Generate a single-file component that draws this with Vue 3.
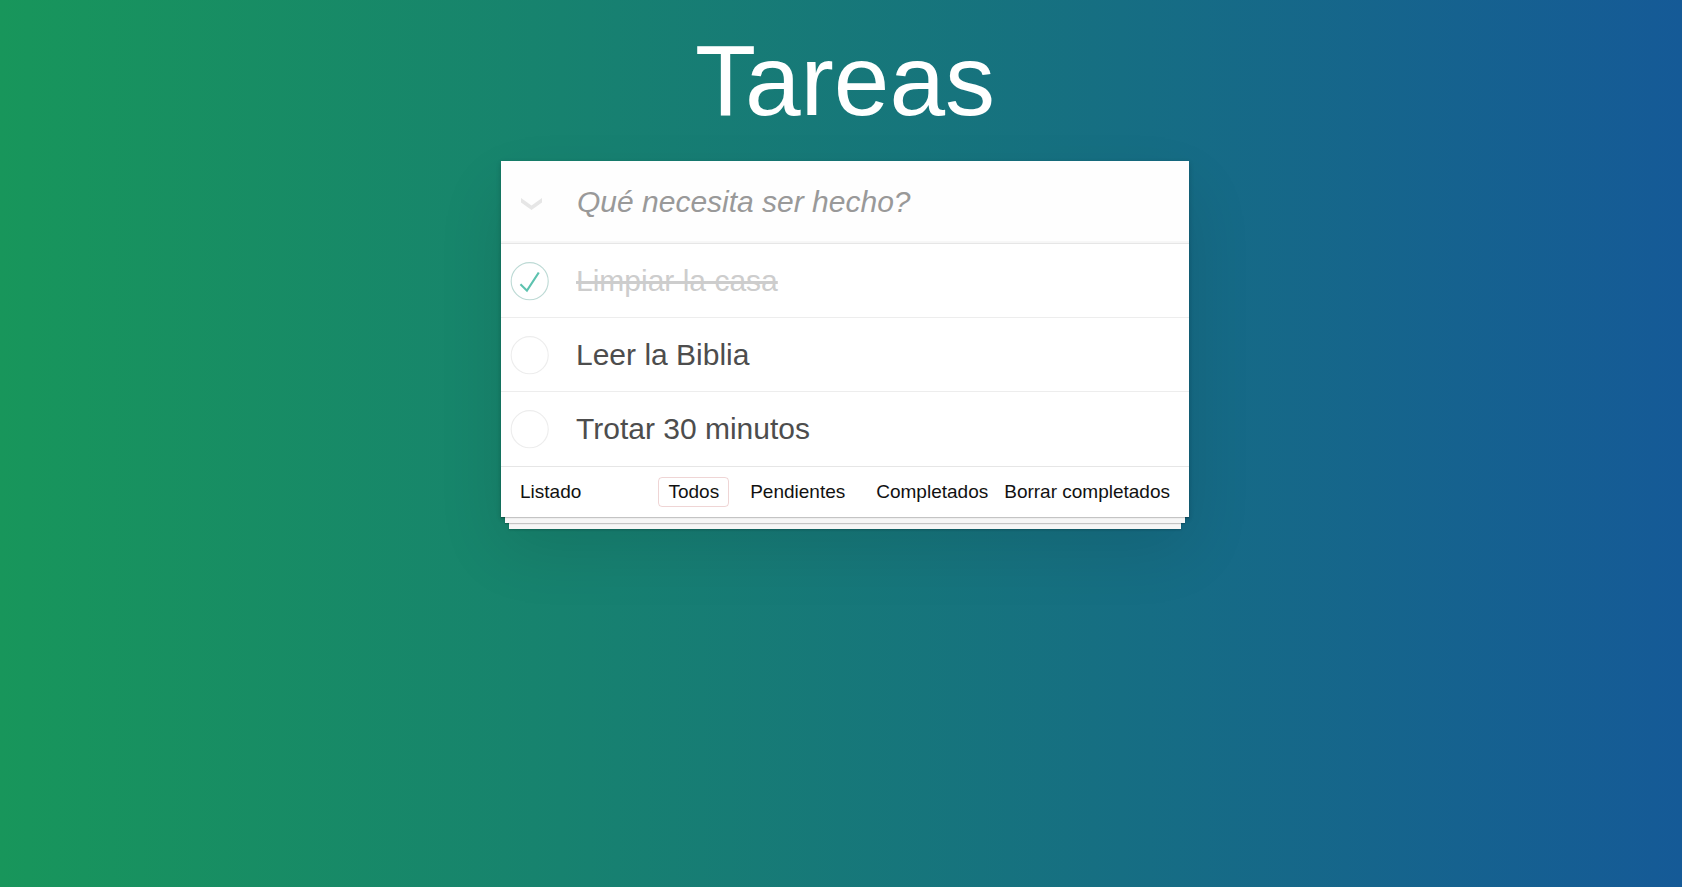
<script setup>
import { computed, ref } from 'vue'

const todos = ref([
  { id: 1, title: 'Limpiar la casa', completed: true },
  { id: 2, title: 'Leer la Biblia', completed: false },
  { id: 3, title: 'Trotar 30 minutos', completed: false },
])

const filters = [
  { key: 'todos', label: 'Todos' },
  { key: 'pendientes', label: 'Pendientes' },
  { key: 'completados', label: 'Completados' },
]

const active = ref('todos')
const draft = ref('')

const visible = computed(() =>
  todos.value.filter((t) => {
    if (active.value === 'pendientes') return !t.completed
    if (active.value === 'completados') return t.completed
    return true
  })
)

const allDone = computed({
  get: () => todos.value.length > 0 && todos.value.every((t) => t.completed),
  set: (value) => todos.value.forEach((t) => (t.completed = value)),
})

function addTodo() {
  const title = draft.value.trim()
  if (!title) return
  todos.value.push({ id: Date.now(), title, completed: false })
  draft.value = ''
}

function clearCompleted() {
  todos.value = todos.value.filter((t) => !t.completed)
}
</script>

<template>
  <div class="page">
    <h1 class="title">Tareas</h1>
    <main class="card">
      <header class="entry">
        <label class="toggle-all">
          <input v-model="allDone" class="native-check" type="checkbox" aria-label="Marcar todas" />
          <svg width="21" height="12" viewBox="0 0 21 12" aria-hidden="true">
            <path d="M0 0L10.5 7.5 21 0V4.5L10.5 12 0 4.5z" fill="#e6e6e6" />
          </svg>
        </label>
        <input
          v-model="draft"
          class="new-todo"
          type="text"
          placeholder="Qué necesita ser hecho?"
          aria-label="Qué necesita ser hecho?"
          @keyup.enter="addTodo"
        />
      </header>

      <ul class="list">
        <li v-for="todo in visible" :key="todo.id" class="item">
          <label class="item-label" :class="{ done: todo.completed }">
            <span class="mark">
              <input v-model="todo.completed" class="native-check" type="checkbox" />
              <svg width="50" height="50" viewBox="-10 -18 100 135" aria-hidden="true">
                <circle
                  cx="50"
                  cy="50"
                  r="50"
                  fill="none"
                  :stroke="todo.completed ? '#bddad5' : '#ededed'"
                  stroke-width="3"
                />
                <path v-if="todo.completed" d="M72 25L42 71 27 56l-4 4 20 20 34-52z" fill="#5dc2af" />
              </svg>
            </span>
            <span class="item-text">{{ todo.title }}</span>
          </label>
        </li>
      </ul>

      <footer class="footer">
        <span>Listado</span>
        <nav class="filters">
          <a
            v-for="f in filters"
            :key="f.key"
            class="filter"
            :class="{ selected: active === f.key }"
            :href="'#/' + f.key"
            @click="active = f.key"
            >{{ f.label }}</a
          >
        </nav>
        <button class="clear" type="button" @click="clearCompleted">Borrar completados</button>
      </footer>
    </main>
  </div>
</template>

<style>
body {
  margin: 0;
}
</style>

<style scoped>
.page {
  box-sizing: border-box;
  min-height: 100vh;
  padding: 22px 8px 80px 16px;
  background: linear-gradient(to right, #18965b, #155a97);
  font-family: "Liberation Sans", Arial, sans-serif;
  color: #4d4d4d;
}

.title {
  margin: 0 0 23px;
  font-size: 100px;
  line-height: 116px;
  font-weight: 400;
  text-align: center;
  color: #fff;
  text-rendering: optimizeLegibility;
}

.card {
  max-width: 688px;
  margin: 0 auto;
  background: #fff;
  box-shadow: 0 2px 5px rgba(0, 0, 0, 0.2), 0 31px 62px rgba(0, 0, 0, 0.1);
}

.entry {
  display: flex;
  height: 82px;
  background: #fefefe;
  box-shadow: inset 0 -2px 1px rgba(0, 0, 0, 0.03);
}

.toggle-all {
  position: relative;
  display: flex;
  align-items: center;
  justify-content: center;
  box-sizing: border-box;
  flex: none;
  width: 61px;
  margin-right: 15px;
  padding-top: 4px;
}

.native-check {
  position: absolute;
  inset: 0;
  width: 100%;
  height: 100%;
  margin: 0;
  opacity: 0;
  cursor: pointer;
}

.new-todo {
  flex: 1;
  min-width: 0;
  padding: 0 20px 0 0;
  border: 0;
  outline: 0;
  background: transparent;
  font: 30px/36px "Liberation Sans", Arial, sans-serif;
  color: inherit;
}

.new-todo::placeholder {
  color: #999;
  font-style: italic;
  opacity: 1;
}

.list {
  margin: 0;
  padding: 0;
  list-style: none;
  border-top: 1px solid #e6e6e6;
}

.item {
  border-bottom: 1px solid #ededed;
}

.item:last-child {
  border-bottom-color: transparent;
}

.item-label {
  display: flex;
  align-items: center;
  min-height: 73px;
  font-size: 30px;
  line-height: 36px;
}

.mark {
  position: relative;
  flex: none;
  width: 50px;
  height: 50px;
  margin-right: 25px;
}

.mark svg {
  display: block;
}

.item-text {
  overflow-wrap: anywhere;
}

.done .item-text {
  color: #cdcdcd;
  text-decoration: line-through;
}

.footer {
  display: flex;
  align-items: center;
  height: 50px;
  padding: 0 19px;
  border-top: 1px solid #e6e6e6;
  font-size: 19px;
  line-height: 28px;
  color: #111;
  box-shadow: 0 1px 1px rgba(0, 0, 0, 0.2), 0 10px 0 -4px #f6f6f6,
    0 11px 1px -4px rgba(0, 0, 0, 0.2), 0 20px 0 -8px #f6f6f6,
    0 21px 2px -8px rgba(0, 0, 0, 0.2);
}

.filters {
  display: flex;
  gap: 11px;
  margin-left: auto;
  margin-right: 6px;
}

.filter {
  padding: 0 9px;
  border: 1px solid transparent;
  border-radius: 4px;
  color: inherit;
  text-decoration: none;
}

.filter.selected {
  border-color: rgba(175, 47, 47, 0.2);
}

.clear {
  padding: 0;
  border: 0;
  background: none;
  font: inherit;
  color: inherit;
  white-space: nowrap;
  cursor: pointer;
}
</style>
